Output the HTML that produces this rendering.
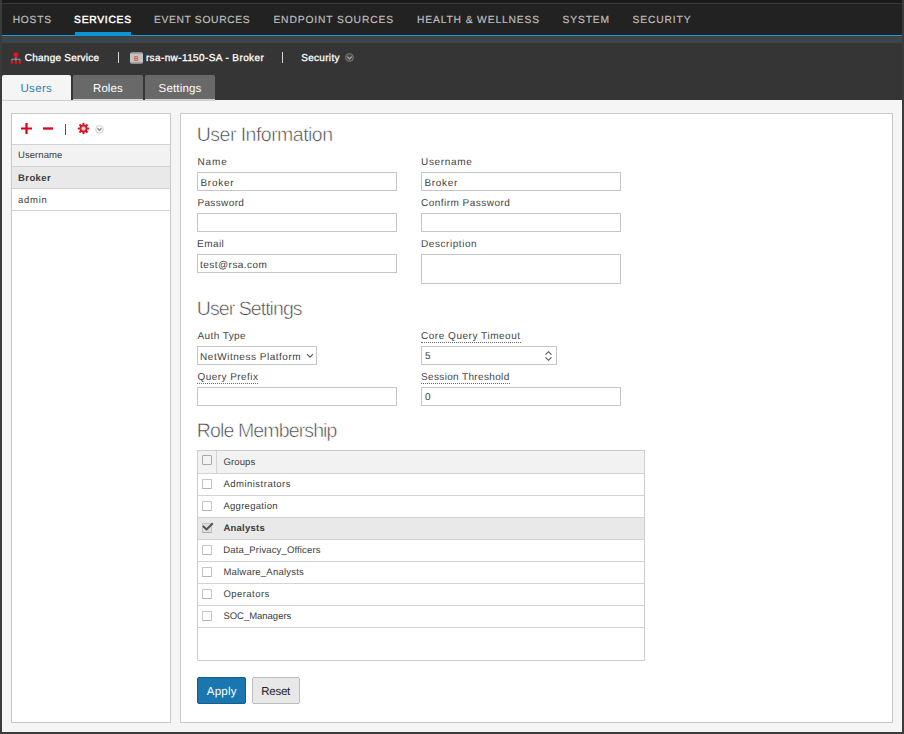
<!DOCTYPE html>
<html lang="en">
<head>
<meta charset="utf-8">
<title>Security - Users</title>
<style>
*{box-sizing:border-box;margin:0;padding:0}
html,body{width:904px;height:734px;overflow:hidden}
body{text-rendering:geometricPrecision;position:relative;background:#3b3b3b;font-family:"Liberation Sans",Arial,sans-serif;font-size:10px;color:#333}
.abs,.t{position:absolute}
.t{white-space:nowrap;line-height:1}
#topstrip{left:2px;top:0;width:900px;height:3px;background:#1a1a1a}
#nav{left:2px;top:4px;width:900px;height:31px;background:#222}
#navline{left:2px;top:35px;width:900px;height:1px;background:#1a9bd7}
#navactive{left:75px;top:32px;width:56px;height:4px;background:#0d93d6}
#band{left:2px;top:36px;width:900px;height:7px;background:#3b444b;border-top:1px solid #393f44}
#toolbar{left:2px;top:43px;width:900px;height:57px;background:#353535}
#content{left:2px;top:100px;width:900px;height:632px;background:#f5f5f5}
.nv{font-size:10.3px;color:#bdbdbd;top:16px;-webkit-text-stroke:0.2px #bdbdbd}
.nv.on{color:#fff;-webkit-text-stroke:0.45px #fff}
.tb{font-size:10px;color:#fff;top:54px;-webkit-text-stroke:0.3px #fff}
.sep{width:1.4px;background:#d6d6d6}
.tab{top:75px;height:24px;border-radius:2px 2px 0 0;background:#696969}
.tab.on{background:#f5f5f5;height:25px}
.tabt{font-size:11.5px;color:#fff;top:84px}
.panel{background:#fff;border:1px solid #c9c9c9}
.hl{height:1px;background:#d3d3d3}
.lbl{font-size:10px;color:#444}
.lbl.dot{border-bottom:1px dotted #6a6a6a;padding-bottom:0}
.h{font-size:19.5px;color:#444;-webkit-text-stroke:0.55px #fff}
.in{background:#fff;border:1px solid #c6c6c6}
.it{font-size:10px;color:#404040}
.cb{width:10px;height:10px;border:1px solid #c6c6c6;border-bottom-color:#b4b4b4;border-radius:1px;background:#fff}
.row{font-size:9.5px;color:#3c3c3c}
.btn{top:677px;height:27px;border-radius:2px}
</style>
</head>
<body>
<div class="abs" id="topstrip"></div>
<div class="abs" id="nav"></div>
<div class="abs" id="navline"></div>
<div class="abs" id="navactive"></div>
<div class="abs" id="band"></div>
<div class="abs" id="toolbar"></div>
<div class="abs" id="content"></div>

<!-- main nav -->
<span class="t nv" id="n1" style="left:12.7px;letter-spacing:0.71px">HOSTS</span>
<span class="t nv on" id="n2" style="left:74.1px;letter-spacing:0.72px">SERVICES</span>
<span class="t nv" id="n3" style="left:153.9px;letter-spacing:0.66px">EVENT SOURCES</span>
<span class="t nv" id="n4" style="left:273.4px;letter-spacing:0.86px">ENDPOINT SOURCES</span>
<span class="t nv" id="n5" style="left:416.9px;letter-spacing:0.86px">HEALTH &amp; WELLNESS</span>
<span class="t nv" id="n6" style="left:562.4px;letter-spacing:0.88px">SYSTEM</span>
<span class="t nv" id="n7" style="left:632.4px;letter-spacing:0.88px">SECURITY</span>

<!-- service toolbar -->
<svg class="abs" id="ictree" style="left:10px;top:52px" width="12" height="12" viewBox="0 0 12 12">
<rect x="3.7" y="0.7" width="4.4" height="4.2" fill="#f0121f" stroke="#8c1a1e" stroke-width="0.6"/>
<path d="M5.9 5v2.2M1.9 9.3V7.2h8v2.1M5.9 7.2v2.1" stroke="#a8a8a8" stroke-width="0.9" fill="none"/>
<rect x="0.7" y="9.3" width="2.4" height="2.3" fill="#e8121f"/><rect x="4.7" y="9.3" width="2.4" height="2.3" fill="#e8121f"/><rect x="8.7" y="9.3" width="2.4" height="2.3" fill="#e8121f"/>
</svg>
<span class="t tb" id="t1" style="left:24.8px;letter-spacing:0.24px">Change Service</span>
<div class="abs sep" style="left:118px;top:52px;height:11px"></div>
<svg class="abs" id="icb" style="left:130px;top:52px" width="13" height="12" viewBox="0 0 13 12">
<rect x="0" y="0" width="13" height="12" rx="2" fill="#8f8f8f"/>
<rect x="0" y="1.6" width="13" height="8.8" fill="#c3c3c3"/>
<text x="6.4" y="8.6" font-family="Liberation Sans, sans-serif" font-size="7" fill="#e8121f" text-anchor="middle">B</text>
</svg>
<span class="t tb" id="t2" style="left:145.9px;letter-spacing:0.39px">rsa-nw-1150-SA - Broker</span>
<div class="abs sep" style="left:282px;top:52px;height:11px"></div>
<span class="t tb" id="t3" style="left:301.2px;letter-spacing:0.31px">Security</span>
<svg class="abs" style="left:344.9px;top:53px" width="9" height="9" viewBox="0 0 9 9">
<circle cx="4.5" cy="4.5" r="3.9" fill="#484848" stroke="#7c7c7c" stroke-width="1"/>
<path d="M2.3 3.7L4.5 5.9L6.7 3.7" stroke="#b0b0b0" stroke-width="1.2" fill="none"/>
</svg>

<!-- tabs -->
<div class="abs hl" style="left:2px;top:100px;width:213px;background:#cecece"></div>
<div class="abs hl" style="left:73px;top:99px;width:70px;background:#d3d3d3"></div>
<div class="abs hl" style="left:145px;top:99px;width:70px;background:#d3d3d3"></div>
<div class="abs tab on" style="left:2px;width:69px"></div>
<div class="abs tab" style="left:73px;width:70px"></div>
<div class="abs tab" style="left:145px;width:70px"></div>
<span class="t tabt" id="tab1" style="left:20.5px;color:#2b7fb5;letter-spacing:0.31px">Users</span>
<span class="t tabt" id="tab2" style="left:93.1px;letter-spacing:0.04px">Roles</span>
<span class="t tabt" id="tab3" style="left:158.6px;letter-spacing:0.17px">Settings</span>

<!-- left panel -->
<div class="abs panel" style="left:11px;top:113px;width:160px;height:610px"></div>
<div class="abs" style="left:12px;top:145px;width:158px;height:21px;background:#f2f2f2"></div>
<div class="abs" style="left:12px;top:167px;width:158px;height:21px;background:#e9e9e9"></div>
<div class="abs hl" style="left:12px;top:144px;width:158px"></div>
<div class="abs hl" style="left:12px;top:166px;width:158px"></div>
<div class="abs hl" style="left:12px;top:188px;width:158px"></div>
<div class="abs hl" style="left:12px;top:210px;width:158px"></div>
<svg class="abs" style="left:21px;top:123px" width="11" height="11" viewBox="0 0 11 11"><path d="M5.5 0v11M0 5.5h11" stroke="#d9001b" stroke-width="2.2"/></svg>
<svg class="abs" style="left:43px;top:123px" width="10" height="11" viewBox="0 0 10 11"><path d="M0 5.5h10" stroke="#d9001b" stroke-width="2.3"/></svg>
<div class="abs" style="left:65px;top:124px;width:1px;height:11px;background:#555"></div>
<svg class="abs" id="gear" style="left:77px;top:122px" width="13" height="13" viewBox="-6.5 -6.5 13 13">
<g fill="#e3101c">
<circle r="3.9"/>
<rect x="-0.95" y="-5.7" width="1.9" height="11.4"/>
<rect x="-0.95" y="-5.7" width="1.9" height="11.4" transform="rotate(45)"/>
<rect x="-0.95" y="-5.7" width="1.9" height="11.4" transform="rotate(90)"/>
<rect x="-0.95" y="-5.7" width="1.9" height="11.4" transform="rotate(135)"/>
</g>
<circle r="2.1" fill="#d4d4d4" stroke="#9e9e9e" stroke-width="0.5"/>
</svg>
<svg class="abs" style="left:94.5px;top:125px" width="9" height="9" viewBox="0 0 9 9">
<circle cx="4.5" cy="4.4" r="3.8" fill="#fff" stroke="#cdcdcd" stroke-width="1"/>
<path d="M2.5 3.3L4.5 5.5L6.5 3.3" stroke="#8c8c8c" stroke-width="1.3" fill="none"/>
</svg>
<span class="t row" id="l1" style="left:18.0px;top:151px;font-size:9.5px;letter-spacing:0.07px">Username</span>
<span class="t row" id="l2" style="left:18.0px;top:174px;font-size:9.5px;font-weight:bold;letter-spacing:0.42px">Broker</span>
<span class="t row" id="l3" style="left:18.0px;top:196px;font-size:9.5px;letter-spacing:0.74px">admin</span>

<!-- right panel -->
<div class="abs panel" style="left:180px;top:113px;width:713px;height:610px"></div>

<span class="t h" id="h1" style="left:196.8px;top:126px;letter-spacing:-0.53px">User Information</span>
<span class="t lbl" id="f1" style="left:197.4px;top:158px;letter-spacing:0.9px">Name</span>
<span class="t lbl" id="f2" style="left:421.0px;top:158px;letter-spacing:0.67px">Username</span>
<div class="abs in" style="left:197px;top:172px;width:200px;height:19px"></div>
<div class="abs in" style="left:421px;top:172px;width:200px;height:19px"></div>
<span class="t it" id="i1" style="left:200.4px;top:179px;letter-spacing:0.75px">Broker</span>
<span class="t it" id="i2" style="left:424.4px;top:179px;letter-spacing:0.71px">Broker</span>

<span class="t lbl" id="f3" style="left:197.4px;top:199px;letter-spacing:0.37px">Password</span>
<span class="t lbl" id="f4" style="left:421.0px;top:199px;letter-spacing:0.48px">Confirm Password</span>
<div class="abs in" style="left:197px;top:213px;width:200px;height:19px"></div>
<div class="abs in" style="left:421px;top:213px;width:200px;height:19px"></div>

<span class="t lbl" id="f5" style="left:197.1px;top:240px;letter-spacing:0.42px">Email</span>
<span class="t lbl" id="f6" style="left:421.0px;top:240px;letter-spacing:0.56px">Description</span>
<div class="abs in" style="left:197px;top:254px;width:200px;height:19px"></div>
<div class="abs in" style="left:421px;top:254px;width:200px;height:30px"></div>
<span class="t it" id="i3" style="left:200.1px;top:261px;letter-spacing:0.45px">test@rsa.com</span>

<span class="t h" id="h2" style="left:196.8px;top:300px;letter-spacing:-0.94px">User Settings</span>
<span class="t lbl" id="f7" style="left:197.4px;top:332px;letter-spacing:0.42px">Auth Type</span>
<span class="t lbl dot" id="f8" style="left:421.0px;top:332px;letter-spacing:0.53px">Core Query Timeout</span>
<div class="abs in" style="left:197px;top:346px;width:120px;height:19px"></div>
<div class="abs in" style="left:421px;top:346px;width:136px;height:19px"></div>
<span class="t it" id="i4" style="left:200.1px;top:353px;letter-spacing:0.52px">NetWitness Platform</span>
<svg class="abs" style="left:305.5px;top:352.5px" width="8" height="6" viewBox="0 0 8 6"><path d="M1 1.2L4 4.2L7 1.2" stroke="#555" stroke-width="1.2" fill="none"/></svg>
<span class="t it" id="i5" style="left:425px;top:352px">5</span>
<svg class="abs" style="left:544px;top:350px" width="9" height="12" viewBox="0 0 9 12"><path d="M1.5 4.6L4.5 1.7L7.5 4.6M1.5 7.4L4.5 10.3L7.5 7.4" stroke="#555" stroke-width="1.15" fill="none"/></svg>

<span class="t lbl dot" id="f9" style="left:197.4px;top:373px;letter-spacing:0.46px">Query Prefix</span>
<span class="t lbl dot" id="f10" style="left:421.0px;top:373px;letter-spacing:0.35px">Session Threshold</span>
<div class="abs in" style="left:197px;top:387px;width:200px;height:19px"></div>
<div class="abs in" style="left:421px;top:387px;width:200px;height:19px"></div>
<span class="t it" id="i6" style="left:425px;top:393px">0</span>

<span class="t h" id="h3" style="left:196.8px;top:422px;letter-spacing:-0.87px">Role Membership</span>

<!-- role table -->
<div class="abs in" style="left:197px;top:450px;width:448px;height:211px;border-color:#cdcdcd"></div>
<div class="abs" style="left:198px;top:451px;width:446px;height:22px;background:#f2f2f2"></div>
<div class="abs" style="left:198px;top:518px;width:446px;height:21px;background:#e9e9e9"></div>
<div class="abs" style="left:216px;top:451px;width:1px;height:22px;background:#d3d3d3"></div>
<div class="abs hl" style="left:198px;top:473px;width:446px"></div>
<div class="abs hl" style="left:198px;top:495px;width:446px"></div>
<div class="abs hl" style="left:198px;top:517px;width:446px"></div>
<div class="abs hl" style="left:198px;top:539px;width:446px"></div>
<div class="abs hl" style="left:198px;top:561px;width:446px"></div>
<div class="abs hl" style="left:198px;top:583px;width:446px"></div>
<div class="abs hl" style="left:198px;top:605px;width:446px"></div>
<div class="abs hl" style="left:198px;top:627px;width:446px"></div>

<div class="abs cb" style="left:202px;top:455px;border-color:#a9a9a9;background:#f3f3f3"></div>
<div class="abs cb" style="left:202px;top:479px"></div>
<div class="abs cb" style="left:202px;top:501px"></div>
<div class="abs cb" style="left:202px;top:523px;background:#dedede;border-color:#c2c2c2;border-bottom-color:#aaa"></div>
<svg class="abs" style="left:202px;top:521px" width="12" height="12" viewBox="0 0 12 12"><path d="M0.9 5L4.6 8.4L10.8 2.3" stroke="#505050" stroke-width="1.9" fill="none"/></svg>
<div class="abs cb" style="left:202px;top:545px"></div>
<div class="abs cb" style="left:202px;top:567px"></div>
<div class="abs cb" style="left:202px;top:589px"></div>
<div class="abs cb" style="left:202px;top:611px"></div>

<span class="t row" id="r0" style="left:223.6px;top:458px;letter-spacing:0.08px">Groups</span>
<span class="t row" id="r1" style="left:223.4px;top:480px;letter-spacing:0.49px">Administrators</span>
<span class="t row" id="r2" style="left:223.4px;top:502px;letter-spacing:0.29px">Aggregation</span>
<span class="t row" id="r3" style="left:223.4px;top:524px;font-weight:bold;letter-spacing:0.26px">Analysts</span>
<span class="t row" id="r4" style="left:223.3px;top:546px;letter-spacing:0.14px">Data_Privacy_Officers</span>
<span class="t row" id="r5" style="left:223.4px;top:568px;letter-spacing:0.22px">Malware_Analysts</span>
<span class="t row" id="r6" style="left:223.4px;top:590px;letter-spacing:0.46px">Operators</span>
<span class="t row" id="r7" style="left:223.4px;top:612px;letter-spacing:-0.02px">SOC_Managers</span>

<!-- buttons -->
<div class="abs btn" style="left:197px;width:49px;background:#1976ae;border:1px solid #145f8e"></div>
<div class="abs btn" style="left:252px;width:48px;background:#e8e8e8;border:1px solid #bdbdbd"></div>
<span class="t" id="b1" style="left:206.8px;top:686.5px;font-size:11.5px;color:#fff;letter-spacing:0.25px">Apply</span>
<span class="t" id="b2" style="left:261.3px;top:686.5px;font-size:11.5px;color:#222;letter-spacing:-0.29px">Reset</span>
</body>
</html>
